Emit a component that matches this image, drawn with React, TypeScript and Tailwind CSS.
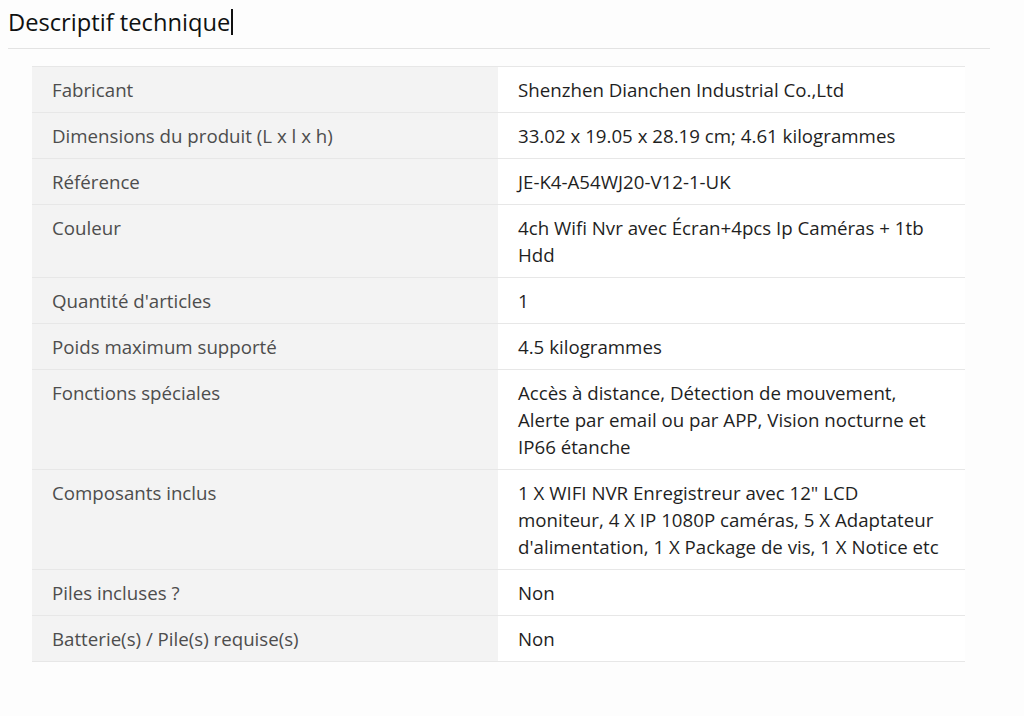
import React from "react";

const rows: [string, string][] = [
  ["Fabricant", "Shenzhen Dianchen Industrial Co.,Ltd"],
  ["Dimensions du produit (L x l x h)", "33.02 x 19.05 x 28.19 cm; 4.61 kilogrammes"],
  ["Référence", "JE-K4-A54WJ20-V12-1-UK"],
  ["Couleur", "4ch Wifi Nvr avec Écran+4pcs Ip Caméras + 1tb Hdd"],
  ["Quantité d'articles", "1"],
  ["Poids maximum supporté", "4.5 kilogrammes"],
  ["Fonctions spéciales", "Accès à distance, Détection de mouvement, Alerte par email ou par APP, Vision nocturne et IP66 étanche"],
  ["Composants inclus", "1 X WIFI NVR Enregistreur avec 12\" LCD moniteur, 4 X IP 1080P caméras, 5 X Adaptateur d'alimentation, 1 X Package de vis, 1 X Notice etc"],
  ["Piles incluses ?", "Non"],
  ["Batterie(s) / Pile(s) requise(s)", "Non"],
];

export default function App() {
  return (
    <div
      className="w-[1024px] h-[716px] bg-[#fdfdfd] overflow-hidden"
      style={{ fontFamily: '"Open Sans", "Noto Sans", sans-serif' }}
    >
      <div className="pt-[5px] pl-[8px] w-[990px]">
        <h2 className="text-[23.7px] leading-[34px] text-[#0f1111] font-normal flex items-center">
          Descriptif technique
          <span className="inline-block w-[1.5px] h-[26px] bg-[#111] ml-[1px]" />
        </h2>
        <div className="mt-[9px] h-[1px] bg-[#e3e3e3]" />
      </div>
      <div className="ml-[32px] mt-[17px] w-[933px] border-t border-[#e7e7e7]">
        {rows.map(([k, v]) => (
          <div key={k} className="flex border-b border-[#e7e7e7] text-[18.7px] leading-[27px]">
            <div className="w-[466px] bg-[#f3f3f3] px-[20px] py-[9px] text-[#4d4d4d]">{k}</div>
            <div className="flex-1 bg-white pl-[20px] pr-[18px] py-[9px] text-[#1f1f1f]">{v}</div>
          </div>
        ))}
      </div>
    </div>
  );
}
